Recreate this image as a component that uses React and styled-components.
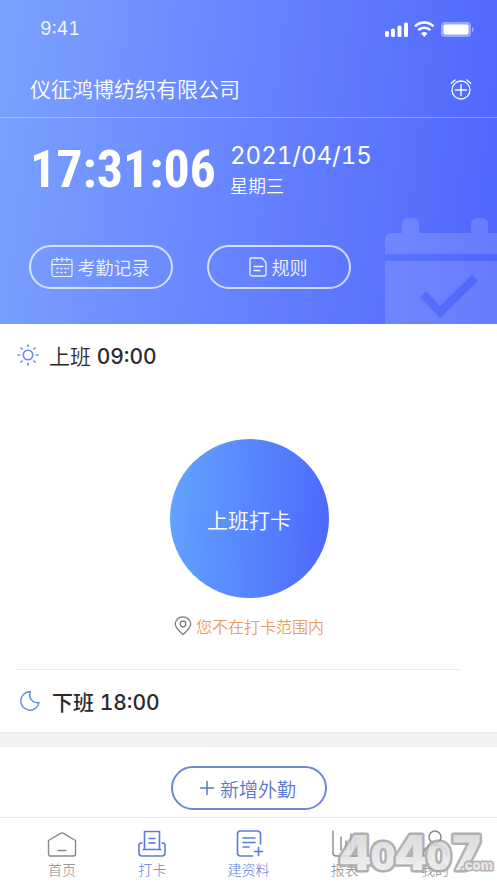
import React from "react";
import styled, { createGlobalStyle } from "styled-components";

const GlobalStyle = createGlobalStyle`
  *, *::before, *::after { box-sizing: border-box; }
  body {
    margin: 0;
    background: #fff;
    font-family: "Inter", "Noto Sans CJK SC", sans-serif;
    font-variant-numeric: tabular-nums;
    color: #2b2b2d;
  }
  button { font: inherit; color: inherit; padding: 0; background: none; border: 0; cursor: pointer; }
  h1, h2, p { margin: 0; font-weight: inherit; }
  svg { display: block; flex: none; }
`;

const Page = styled.div`
  min-height: 100vh;
  display: flex;
  flex-direction: column;
`;

const Header = styled.header`
  position: relative;
  overflow: hidden;
  height: 324px;
  color: #fff;
  background: linear-gradient(97deg, #7ba2ff 0%, #6683ff 50%, #4e66fd 100%);
`;

const StatusBar = styled.div`
  display: flex;
  align-items: center;
  justify-content: space-between;
  height: 60px;
  padding: 0 23px 2px 40px;
  font: 400 18px/20px "Inter", sans-serif;
  font-variant-numeric: tabular-nums;
  color: #f0f4ff;
`;

const TitleBar = styled.div`
  display: flex;
  align-items: center;
  justify-content: space-between;
  height: 58px;
  padding: 0 25px 0 30px;
  border-bottom: 1px solid rgba(255, 255, 255, 0.3);
`;

const Company = styled.h1`
  padding-bottom: 2px;
  font-family: "Noto Sans CJK SC", sans-serif;
  font-size: 21px;
  font-weight: 350;
  line-height: 32px;
`;

const ClockRow = styled.div`
  display: flex;
  align-items: center;
  gap: 22px;
  height: 104px;
  padding: 0 30px;
`;

const Clock = styled.time`
  font-family: "Roboto Condensed", "Liberation Sans Narrow", sans-serif;
  font-size: 52px;
  font-weight: 700;
  line-height: 60px;
  width: 178px;
  white-space: nowrap;
`;

const DateText = styled.p`
  font-size: 24px;
  line-height: 30px;
`;

const Weekday = styled.p`
  font-family: "Noto Sans CJK SC", sans-serif;
  font-size: 18px;
  font-weight: 350;
  line-height: 28px;
`;

const Actions = styled.div`
  display: flex;
  gap: 34px;
  padding: 23px 29px 0;
`;

const PillButton = styled.button`
  display: flex;
  align-items: center;
  justify-content: center;
  gap: 5px;
  width: ${(p) => (p.$wide ? 156 : 144)}px;
  height: 44px;
  padding-right: 2px;
  border: 2px solid ${(p) => p.$edge};
  border-radius: 22px;
  color: ${(p) => p.$tone};
  font-family: "Noto Sans CJK SC", sans-serif;
  font-size: ${(p) => (p.$wide ? 19 : 18)}px;
  font-weight: 350;
`;

const HeaderArt = styled.svg`
  position: absolute;
  right: 0;
  bottom: 0;
`;

const Shift = styled.h2`
  display: flex;
  align-items: center;
  height: 62px;
  padding-left: 17px;
  gap: ${(p) => (p.$strong ? 11 : 10)}px;
  font-size: 21px;
  font-weight: ${(p) => (p.$strong ? 500 : 350)};
  time { font-weight: 500; }
`;

const PunchArea = styled.section`
  margin: 0 35px 0 16px;
  padding: 53px 0 29px;
  border-bottom: 1px solid #ececee;
`;

const Centered = styled.div`
  display: flex;
  flex-direction: column;
  align-items: center;
  gap: 14px;
  padding-left: 20px;
`;

const PunchButton = styled.button`
  width: 159px;
  height: 159px;
  border-radius: 50%;
  color: #fff;
  background: linear-gradient(95deg, #62a5ff, #4d66fd);
  font-family: "Noto Sans CJK SC", sans-serif;
  font-size: 21px;
  font-weight: 350;
`;

const Hint = styled.p`
  display: flex;
  align-items: center;
  gap: 4px;
  color: #e6a060;
  font-family: "Noto Sans CJK SC", sans-serif;
  font-size: 16px;
  font-weight: 350;
  line-height: 28px;
`;

const Band = styled.div`
  height: 15px;
  background: #f2f2f3;
  border: solid #e9eaee;
  border-width: 1px 0;
`;

const Outside = styled.section`
  display: flex;
  justify-content: center;
  padding: 19px 0 7px;
`;

const TabBar = styled.nav`
  position: relative;
  display: flex;
  flex: 1;
  justify-content: space-between;
  align-items: flex-start;
  padding: 11px 47px 0;
  border-top: 1px solid #ececf0;
`;

const Tab = styled.button`
  display: flex;
  flex-direction: column;
  align-items: center;
  color: ${(p) => (p.$active ? "#5a7cd8" : "#88898c")};
  font-family: "Noto Sans CJK SC", sans-serif;
  font-size: 14px;
  font-weight: 300;
  line-height: 20px;
`;

const Watermark = styled.svg`
  position: absolute;
  right: 0;
  top: 0;
  overflow: visible;
  pointer-events: none;
`;

function Line({ w = 20, h = 20, sw = 1.4, color = "currentColor", children }) {
  return (
    <svg width={w} height={h} viewBox={`0 0 ${w} ${h}`} fill="none" stroke={color}
      strokeWidth={sw} strokeLinecap="round" strokeLinejoin="round" aria-hidden="true">
      {children}
    </svg>
  );
}

const StatusIcons = () => (
  <svg width="90" height="18" viewBox="0 0 90 18" fill="#fff" aria-hidden="true">
    <rect x="1" y="11" width="4" height="6" rx="1.500" />
    <rect x="7" y="8.500" width="4" height="8.500" rx="1.500" />
    <rect x="13.500" y="5.500" width="4" height="11.500" rx="1.500" />
    <rect x="20" y="2.500" width="4" height="14.500" rx="1.500" />
    <g fill="none" stroke="#fff" strokeWidth="2.6">
      <path d="M31 6.400a13 13 0 0 1 18.600 0" />
      <path d="M34.300 10.200a8.400 8.400 0 0 1 12 0" />
    </g>
    <path d="M37.200 13.400a4.400 4.400 0 0 1 6.200 0L40.300 17z" />
    <rect x="57" y="2" width="30" height="15" rx="4" opacity="0.4" />
    <rect x="59.500" y="4.500" width="25" height="10" rx="2" />
    <path d="M88 7c2 .8 2 4.200 0 5z" opacity="0.5" />
  </svg>
);

const AlarmPlus = () => (
  <Line w={22} h={22} sw={1.3}>
    <circle cx="11" cy="12" r="9" />
    <path d="M11 6.500v11M5.500 12h11M1.200 5.200 5.200 2M20.800 5.200 16.800 2" />
  </Line>
);

const CalendarIcon = () => (
  <Line w={22} h={22} sw={1.2}>
    <rect x="1" y="3.500" width="20" height="17" rx="2" />
    <path d="M1 8.500h20M6 1.500v4M11 1.500v4M16 1.500v4" />
    <path d="M6 12.500h.8M10 12.500h.8M14 12.500h.8M17 12.500h.3M6 16.500h.8M10 16.500h.8M14 16.500h.8" strokeWidth="1.600" />
  </Line>
);

const RulesIcon = () => (
  <Line w={18} h={20} sw={1.3}>
    <path d="M3 1h10l4 4.500V17a2 2 0 0 1-2 2H3a2 2 0 0 1-2-2V3a2 2 0 0 1 2-2z" />
    <path d="M5 9.500h9M5 13.500h6" />
  </Line>
);

const SunIcon = () => (
  <Line w={22} h={22} sw={1.6} color="#6288d8">
    <circle cx="11" cy="11" r="4.700" />
    <path d="M11 1v1.500M11 19.500V21M1 11h1.500M19.500 11H21M4 4l1 1M17 17l1 1M4 18l1-1M17 5l1-1" />
  </Line>
);

const MoonIcon = () => (
  <Line w={24} h={22} sw={1.4} color="#6288d8">
    <path d="M13.500 1.800C11.200 7 14.500 13.400 22 12.600A9.200 9.200 0 1 1 13.500 1.800z" />
  </Line>
);

const PinIcon = () => (
  <Line w={18} h={20} sw={1.3} color="#77797d">
    <path d="M9 18.500C5 15 1.300 12 1.300 8a7.700 7.200 0 0 1 15.400 0c0 4-3.700 7-7.700 10.500z" />
    <circle cx="9" cy="8" r="2.800" />
  </Line>
);

const PlusIcon = () => (
  <Line w={16} h={16} sw={1.5}><path d="M8 1.500v13M1.500 8h13" /></Line>
);

const HomeIcon = () => (
  <Line w={30} h={30} sw={1.400}>
    <path d="M1.500 11.500 14 4.200a2 2 0 0 1 2 0l12.500 7.300V25a2 2 0 0 1-2 2h-23a2 2 0 0 1-2-2zM11 21.500h8" />
  </Line>
);

const PunchIcon = () => (
  <Line w={30} h={30} sw={1.600}>
    <path d="M7.500 20.500v-18h15v18M6 20.500h18M12 9.500h6M12 14h6" />
    <path d="M5 14H4a2 2 0 0 0-2 2v8a3 3 0 0 0 3 3h20a3 3 0 0 0 3-3v-8a2 2 0 0 0-2-2h-1" />
  </Line>
);

const DataIcon = () => (
  <Line w={30} h={30} sw={1.600}>
    <path d="M26.500 15V5a3 3 0 0 0-3-3h-17a3 3 0 0 0-3 3v19a3 3 0 0 0 3 3h12M9 9h12M9 13.500h12M9 18h6M24.500 18.500v8M20.500 22.500h8" />
  </Line>
);

const ReportIcon = () => (
  <Line w={30} h={30} sw={1.400}>
    <path d="M3 2v22a3 3 0 0 0 3 3h22M11 8v13M16 12v9M21 5v16M25 10v11" />
  </Line>
);

const MineIcon = () => (
  <Line w={30} h={30} sw={1.500}>
    <circle cx="15" cy="8" r="6" />
    <path d="M3 27c0-7 5-11 12-11s12 4 12 11" />
  </Line>
);

const CalendarArt = () => (
  <HeaderArt width="112" height="106" viewBox="0 0 112 106" aria-hidden="true">
    <path fill="#fff" fillOpacity="0.14"
      d="M0 36V20a5 5 0 0 1 5-5h12V6a6 6 0 0 1 6-6h5a6 6 0 0 1 6 6v9h52V6a6 6 0 0 1 6-6h5a6 6 0 0 1 6 6v9h9v21z" />
    <path fill="#fff" fillOpacity="0.14" fillRule="evenodd"
      d="M0 43h112v63H0zM35 79l20 21 38-37-6-6-32 31-14-15z" />
  </HeaderArt>
);

const SiteMark = () => (
  <Watermark width="160" height="65" viewBox="0 0 160 65" role="img" aria-label="40407.com">
    <defs>
      <linearGradient id="silver" x1="0" y1="0" x2="0" y2="1">
        <stop offset="0" stopColor="#cfcfcf" />
        <stop offset="1" stopColor="#f4f4f4" />
      </linearGradient>
    </defs>
    <g fontFamily="Inter, sans-serif" fontWeight="900" fill="url(#silver)" stroke="#a4a4a4"
      strokeLinejoin="round" paintOrder="stroke" opacity="0.86">
      <text x="3" y="52" fontSize="48" strokeWidth="5">
        4<tspan fontSize="38">0</tspan>4<tspan fontSize="38">0</tspan>7
      </text>
      <text x="156" y="52" fontSize="13" strokeWidth="3" textAnchor="end">.com</text>
    </g>
  </Watermark>
);

const tabs = [
  { label: "首页", Icon: HomeIcon },
  { label: "打卡", Icon: PunchIcon, active: true },
  { label: "建资料", Icon: DataIcon, active: true },
  { label: "报表", Icon: ReportIcon },
  { label: "我的", Icon: MineIcon },
];

export default function App() {
  return (
    <Page>
      <GlobalStyle />
      <Header>
        <CalendarArt />
        <StatusBar><span>9:41</span><StatusIcons /></StatusBar>
        <TitleBar>
          <Company>仪征鸿博纺织有限公司</Company>
          <button aria-label="添加提醒"><AlarmPlus /></button>
        </TitleBar>
        <ClockRow>
          <Clock>17:31:06</Clock>
          <div>
            <DateText>2021/04/15</DateText>
            <Weekday>星期三</Weekday>
          </div>
        </ClockRow>
        <Actions>
          <PillButton $tone="#eef2ff" $edge="rgba(255, 255, 255, 0.72)"><CalendarIcon />考勤记录</PillButton>
          <PillButton $tone="#eef2ff" $edge="rgba(255, 255, 255, 0.72)"><RulesIcon />规则</PillButton>
        </Actions>
      </Header>
      <main>
        <Shift><SunIcon /><span>上班 <time>09:00</time></span></Shift>
        <PunchArea>
          <Centered>
            <PunchButton>上班打卡</PunchButton>
            <Hint><PinIcon />您不在打卡范围内</Hint>
          </Centered>
        </PunchArea>
        <Shift $strong><MoonIcon /><span>下班 <time>18:00</time></span></Shift>
        <Band />
        <Outside>
          <PillButton $wide $tone="#5577cc" $edge="#6c88d2"><PlusIcon />新增外勤</PillButton>
        </Outside>
      </main>
      <TabBar>
        {tabs.map(({ label, Icon, active }) => (
          <Tab key={label} $active={active}><Icon />{label}</Tab>
        ))}
        <SiteMark />
      </TabBar>
    </Page>
  );
}
